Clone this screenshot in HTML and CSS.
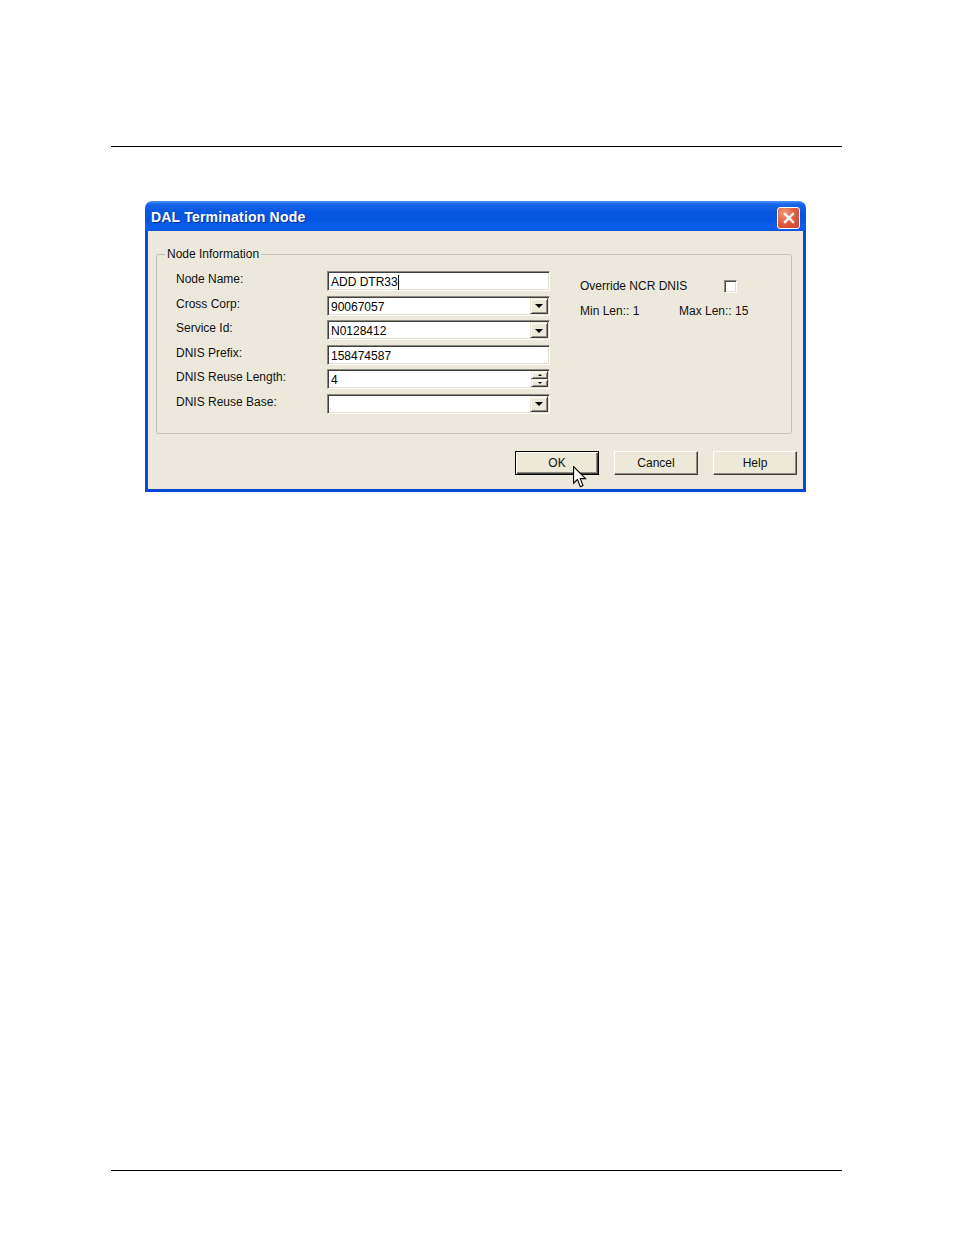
FILE: index.html
```html
<!DOCTYPE html>
<html>
<head>
<meta charset="utf-8">
<link rel="stylesheet" href="styles.css">
</head>
<body>
<div class="page">
  <div class="rule rule-top"></div>
  <div class="dialog">
    <div class="titlebar">
      <span class="title">DAL Termination Node</span>
      <span class="close">
        <svg width="20" height="20" viewBox="0 0 20 20"><path d="M6 6 L14 14 M14 6 L6 14" stroke="#fff" stroke-width="2.4" stroke-linecap="square"/></svg>
      </span>
    </div>
    <div class="client">
      <fieldset class="group">
        <legend>Node Information</legend>
        <div class="content">
          <div class="form">
            <label>Node Name:</label>
            <div class="edit"><span>ADD DTR33</span><span class="caret"></span></div>
            <label>Cross Corp:</label>
            <div class="edit"><span>90067057</span><span class="drop"><span class="arrow"></span></span></div>
            <label>Service Id:</label>
            <div class="edit"><span>N0128412</span><span class="drop"><span class="arrow"></span></span></div>
            <label>DNIS Prefix:</label>
            <div class="edit"><span>158474587</span></div>
            <label>DNIS Reuse Length:</label>
            <div class="edit"><span>4</span><span class="spin"><span class="half"><span class="up"></span></span><span class="half"><span class="down"></span></span></span></div>
            <label>DNIS Reuse Base:</label>
            <div class="edit"><span></span><span class="drop"><span class="arrow"></span></span></div>
          </div>
          <div class="side">
            <div class="override"><span class="otext">Override NCR DNIS</span><span class="check"></span></div>
            <div class="lens"><span class="minlen">Min Len:: 1</span><span>Max Len:: 15</span></div>
          </div>
        </div>
      </fieldset>
      <div class="buttons">
        <button class="btn default">OK</button>
        <button class="btn">Cancel</button>
        <button class="btn">Help</button>
      </div>
    </div>
    <svg class="cursor" width="14" height="22" viewBox="0 0 12.6 19.8">
      <path d="M0.5 0.5 L0.5 15.5 L4 12.2 L6.6 18.6 L9 17.6 L6.5 11.4 L11.3 11.4 Z" fill="#fff" stroke="#000" stroke-width="1" stroke-linejoin="miter"/>
    </svg>
  </div>
  <div class="rule rule-bottom"></div>
</div>
</body>
</html>
```

FILE: styles.css
```css
html, body {
  margin: 0;
  padding: 0;
  background: #fff;
}
body {
  font-family: "Liberation Sans", Arial, sans-serif;
  color: #000;
}
.page {
  width: 954px;
  height: 1235px;
  overflow: hidden;
}
.rule {
  height: 1px;
  background: #000;
  width: 731px;
  margin-left: 111px;
}
.rule-top {
  margin-top: 146px;
}
.rule-bottom {
  margin-top: 678px;
}
.dialog {
  position: relative;
  width: 661px;
  margin: 54px 0 0 145px;
}
.titlebar {
  box-sizing: border-box;
  height: 30px;
  border-radius: 7px 7px 0 0;
  background: linear-gradient(#4d97fb 0%, #1a66ea 10%, #0757e2 35%, #0554e0 60%, #0a5fec 88%, #0a56dc 100%);
  display: flex;
  align-items: center;
  justify-content: space-between;
  padding: 0 6px 0 6px;
}
.title {
  color: #fff;
  font-weight: bold;
  font-size: 14px;
  line-height: 16px;
  letter-spacing: 0.2px;
  text-shadow: 1px 1px 0 #0b2f9a;
  margin-top: 2px;
}
.close {
  box-sizing: border-box;
  width: 23px;
  height: 22px;
  border: 1px solid #fff;
  border-radius: 3px;
  background: radial-gradient(circle at 30% 25%, #f29a7f 0%, #e2603f 45%, #c9402a 100%);
  display: flex;
  align-items: center;
  justify-content: center;
  margin-top: 3px;
}
.client {
  background: #ece9dc;
  border: 3px solid #0a48d6;
  border-top: 0;
  padding: 16px 0 14px 0;
}
.group {
  margin: 0 11px 0 8px;
  padding: 0;
  border: 1px solid #c3c0b0;
  border-radius: 3px;
  min-width: 0;
}
.group legend {
  margin-left: 8px;
  padding: 0 2px;
  font-size: 12px;
  line-height: 14px;
  color: #111;
}
.content {
  display: flex;
  padding: 10px 0 19px 19px;
}
.form {
  display: grid;
  grid-template-columns: 151px 223px;
  grid-auto-rows: 20px;
  row-gap: 4.6px;
}
.form label {
  font-size: 12px;
  line-height: 14px;
  padding-top: 1px;
  color: #111;
}
.edit {
  box-sizing: border-box;
  height: 20px;
  display: flex;
  align-items: center;
  background: #fff;
  border: 1px solid;
  border-color: #8d8a80 #fff #fff #8d8a80;
  box-shadow: inset 1px 1px 0 #3f3f3f, inset -1px -1px 0 #e2dfd2;
  padding: 2px 1px 0 3px;
  font-size: 12px;
  line-height: 16px;
  white-space: nowrap;
}
.caret {
  width: 1px;
  height: 15px;
  background: #000;
}
.drop {
  box-sizing: border-box;
  margin-left: auto;
  margin-top: -2px;
  width: 18px;
  height: 16px;
  background: #ece9d8;
  border: 1px solid;
  border-color: #ece9d8 #404040 #404040 #ece9d8;
  box-shadow: inset 1px 1px 0 #fff, inset -1px -1px 0 #8d8a80;
  display: flex;
  align-items: center;
  justify-content: center;
}
.arrow {
  width: 0;
  height: 0;
  border-left: 4px solid transparent;
  border-right: 4px solid transparent;
  border-top: 4px solid #000;
  margin-top: 1px;
}
.spin {
  margin-left: auto;
  margin-top: -2px;
  width: 17px;
  height: 16px;
  display: flex;
  flex-direction: column;
}
.half {
  box-sizing: border-box;
  height: 8px;
  background: #ece9d8;
  border: 1px solid;
  border-color: #ece9d8 #404040 #404040 #ece9d8;
  box-shadow: inset 1px 1px 0 #fff, inset -1px -1px 0 #8d8a80;
  display: flex;
  align-items: center;
  justify-content: center;
}
.up {
  width: 0;
  height: 0;
  border-left: 2px solid transparent;
  border-right: 2px solid transparent;
  border-bottom: 2px solid #000;
}
.down {
  width: 0;
  height: 0;
  border-left: 2px solid transparent;
  border-right: 2px solid transparent;
  border-top: 2px solid #000;
}
.side {
  margin-left: 30px;
  padding-top: 8px;
  font-size: 12px;
  line-height: 14px;
  color: #111;
}
.override {
  display: flex;
  align-items: center;
}
.otext {
  width: 144px;
}
.check {
  box-sizing: border-box;
  width: 13px;
  height: 13px;
  background: #fff;
  border: 1px solid;
  border-color: #8d8a80 #fff #fff #8d8a80;
  box-shadow: inset 1px 1px 0 #4a4a4a, inset -1px -1px 0 #e2dfd2;
}
.lens {
  display: flex;
  margin-top: 11px;
}
.minlen {
  width: 99px;
}
.buttons {
  display: flex;
  justify-content: flex-end;
  gap: 15px;
  margin-top: 17px;
  padding-right: 6px;
}
.btn {
  box-sizing: border-box;
  width: 84px;
  height: 24px;
  margin: 0;
  padding: 0;
  font-family: "Liberation Sans", Arial, sans-serif;
  font-size: 12px;
  color: #111;
  background: #ece9d8;
  border: 1px solid;
  border-color: #fff #404040 #404040 #fff;
  box-shadow: inset -1px -1px 0 #8d8a80;
  display: flex;
  align-items: center;
  justify-content: center;
}
.btn.default {
  border-color: #000;
  box-shadow: inset 1px 1px 0 #fff, inset -1px -1px 0 #404040, inset -2px -2px 0 #8d8a80;
}
.cursor {
  position: absolute;
  left: 428px;
  top: 265px;
}
```
